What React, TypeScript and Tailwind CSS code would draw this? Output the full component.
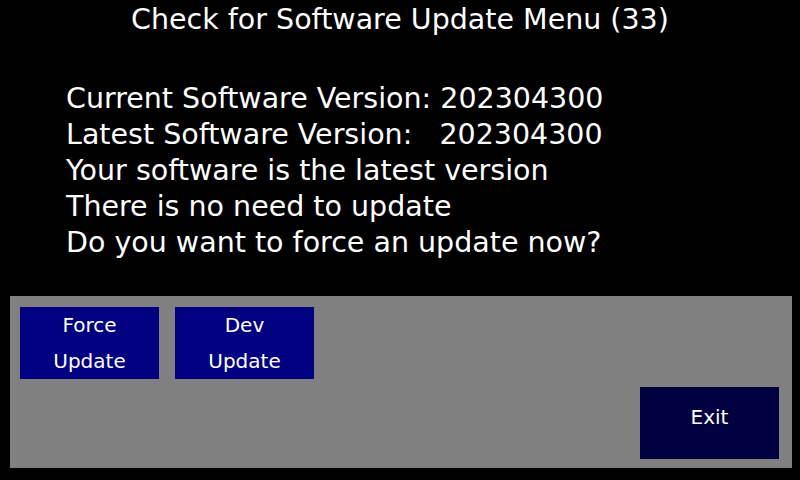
export default function App() {
  const lines = [
    "Current Software Version: 202304300",
    "Latest Software Version:   202304300",
    "Your software is the latest version",
    "There is no need to update",
    "Do you want to force an update now?",
  ];
  return (
    <div className="w-[800px] h-[480px] bg-black text-white flex flex-col" style={{ fontFamily: '"DejaVu Sans", sans-serif' }}>
      <div className="h-[44px] pt-[2px] text-center text-[28.5px] leading-[36px]">
        Check for Software Update Menu (33)
      </div>
      <div className="h-[252px] pl-[66px] pt-[37px] text-[28.5px] leading-[36px]">
        {lines.map((l) => (
          <div key={l} className="whitespace-pre">{l}</div>
        ))}
      </div>
      <div className="ml-[10px] w-[782px] h-[172px] bg-[#808080] flex flex-col pt-[11px] pl-[10px]">
        <div className="flex gap-[16px]">
          <div className="w-[139px] h-[72px] bg-[#000080] flex flex-col items-center text-[20px] leading-[36px]">
            <span>Force</span>
            <span>Update</span>
          </div>
          <div className="w-[139px] h-[72px] bg-[#000080] flex flex-col items-center text-[20px] leading-[36px]">
            <span>Dev</span>
            <span>Update</span>
          </div>
        </div>
        <div className="ml-[620px] mt-[8px] w-[139px] h-[72px] bg-[#000040] flex justify-center pt-[12px] text-[20px] leading-[36px]">
          Exit
        </div>
      </div>
    </div>
  );
}
